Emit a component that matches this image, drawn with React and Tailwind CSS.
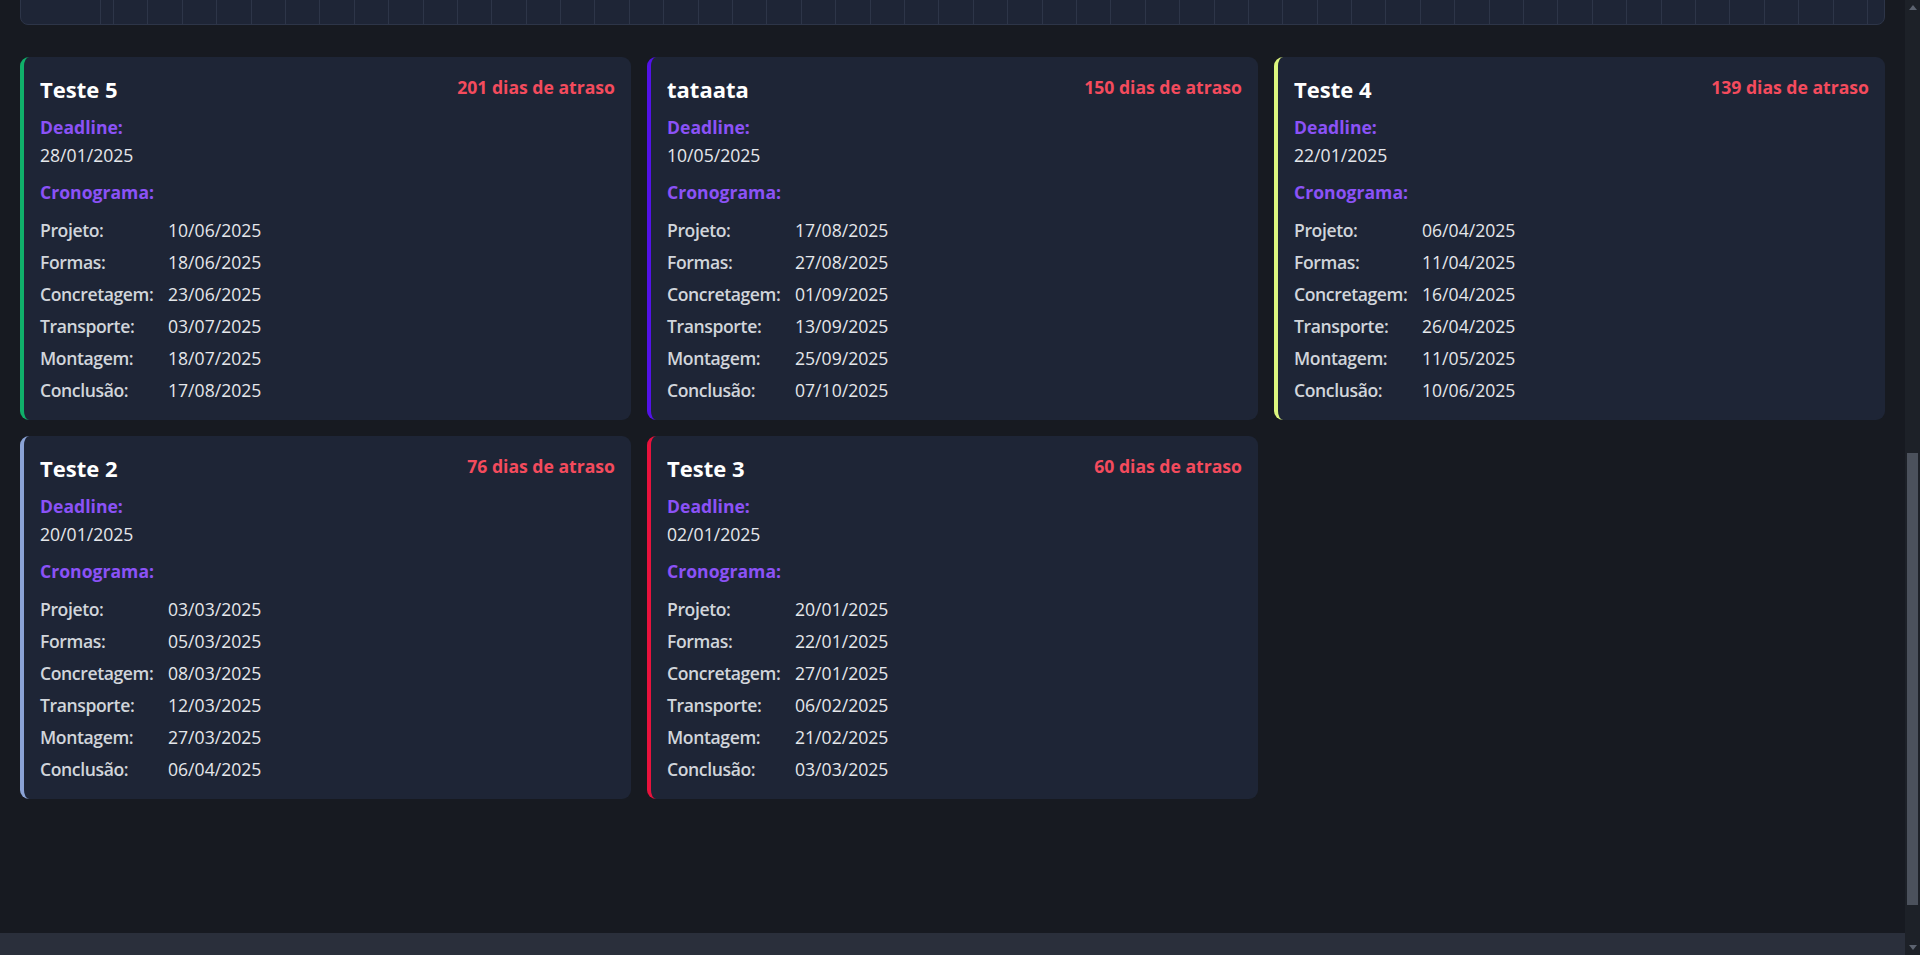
import { useLayoutEffect, useRef } from 'react'

const ETAPAS = ['Projeto', 'Formas', 'Concretagem', 'Transporte', 'Montagem', 'Conclusão']
const SEMANAS = 51

const projetos = [
  {
    nome: 'Teste 5',
    atraso: 201,
    cor: '#10b06a',
    deadline: '28/01/2025',
    datas: ['10/06/2025', '18/06/2025', '23/06/2025', '03/07/2025', '18/07/2025', '17/08/2025'],
  },
  {
    nome: 'tataata',
    atraso: 150,
    cor: '#5212e8',
    deadline: '10/05/2025',
    datas: ['17/08/2025', '27/08/2025', '01/09/2025', '13/09/2025', '25/09/2025', '07/10/2025'],
  },
  {
    nome: 'Teste 4',
    atraso: 139,
    cor: '#dcf57e',
    deadline: '22/01/2025',
    datas: ['06/04/2025', '11/04/2025', '16/04/2025', '26/04/2025', '11/05/2025', '10/06/2025'],
  },
  {
    nome: 'Teste 2',
    atraso: 76,
    cor: '#8ba3d6',
    deadline: '20/01/2025',
    datas: ['03/03/2025', '05/03/2025', '08/03/2025', '12/03/2025', '27/03/2025', '06/04/2025'],
  },
  {
    nome: 'Teste 3',
    atraso: 60,
    cor: '#e8123c',
    deadline: '02/01/2025',
    datas: ['20/01/2025', '22/01/2025', '27/01/2025', '06/02/2025', '21/02/2025', '03/03/2025'],
  },
]

// semana do ano (0 = primeira semana de 2025)
const semana = (data) => {
  const [d, m, a] = data.split('/').map(Number)
  return Math.floor((Date.UTC(a, m - 1, d) - Date.UTC(2025, 0, 1)) / 604800000)
}

function LinhaGantt({ cor, inicio, fim, alto }) {
  return (
    <div className={`flex border-b border-[#2d3548] last:border-b-0 ${alto ? 'flex-1' : 'h-12'}`}>
      <div className="w-[80px] shrink-0 border-r border-[#2d3548]" />
      <div className="w-[13px] shrink-0 border-r border-[#2d3548]" />
      {Array.from({ length: SEMANAS }, (_, i) => (
        <div key={i} className="w-[34.4px] shrink-0 border-r border-[#2d3548] flex items-center">
          {cor && i >= inicio && i <= fim && <span className="w-full h-5" style={{ backgroundColor: cor }} />}
        </div>
      ))}
      <div className="flex-1" />
    </div>
  )
}

function CardProjeto({ projeto }) {
  return (
    <div
      className="rounded-[9px] border-l-4 bg-[#1e2536] pl-4 pr-4 pt-[17px] pb-[17px]"
      style={{ borderLeftColor: projeto.cor }}
    >
      <div className="flex items-start justify-between">
        <h3 className="text-[22px] leading-[30px] font-bold text-white">{projeto.nome}</h3>
        <span className="text-[17.6px] leading-[26px] font-bold text-[#f44b5d]">
          {projeto.atraso} dias de atraso
        </span>
      </div>

      <p className="mt-[10px] text-[17.6px] leading-[26px] font-bold text-[#8b52f6]">Deadline:</p>
      <p className="mt-[2px] text-[17.6px] leading-[26px] text-[#e5e7eb]">{projeto.deadline}</p>

      <p className="mt-[11px] text-[17.6px] leading-[26px] font-bold text-[#8b52f6]">Cronograma:</p>
      <div className="mt-3 flex flex-col gap-[6px]">
        {ETAPAS.map((etapa, i) => (
          <div key={etapa} className="flex text-[17.6px] leading-[26px]">
            <span className="w-[128px] shrink-0 font-semibold tracking-[-0.4px] text-[#d1d5db]">{etapa}:</span>
            <span className="font-medium text-[#e5e7eb]">{projeto.datas[i]}</span>
          </div>
        ))}
      </div>
    </div>
  )
}

function Seta({ baixo }) {
  return (
    <div className="h-[15px] flex items-center justify-center">
      <svg width="8" height="5" viewBox="0 0 8 5" className={baixo ? 'rotate-180' : ''}>
        <path d="M4 0 L8 5 L0 5 Z" fill="#5c6370" />
      </svg>
    </div>
  )
}

export default function App() {
  const scrollRef = useRef(null)

  useLayoutEffect(() => {
    if (scrollRef.current) scrollRef.current.scrollTop = 929
  }, [])

  return (
    <div className="h-screen flex bg-[#171a21] font-['Open_Sans','Noto_Sans',sans-serif]">
      <div className="flex-1 min-w-0 flex flex-col">
        <div ref={scrollRef} className="flex-1 overflow-hidden">
          <div className="px-5 pt-[76px] pb-[207px]">
            <div className="h-[878px] flex flex-col rounded-lg border border-[#2d3548] bg-[#1e2536] overflow-hidden">
              <LinhaGantt />
              {projetos.map((p) => (
                <LinhaGantt key={p.nome} cor={p.cor} inicio={semana(p.datas[0])} fim={semana(p.datas[5])} />
              ))}
              <LinhaGantt alto />
            </div>

            <div className="mt-8 grid grid-cols-3 gap-4">
              {projetos.map((p) => (
                <CardProjeto key={p.nome} projeto={p} />
              ))}
            </div>
          </div>
        </div>
        <div className="h-[22px] shrink-0 bg-[#2a2f3b]" />
      </div>

      {/* barra de rolagem */}
      <div className="w-[15px] shrink-0 flex flex-col bg-[#1d2128]">
        <Seta />
        <div className="flex-1 pl-[2px] pr-[2px]">
          <div className="mt-[438px] h-[452px] bg-[#4b515c]" />
        </div>
        <Seta baixo />
      </div>
    </div>
  )
}
